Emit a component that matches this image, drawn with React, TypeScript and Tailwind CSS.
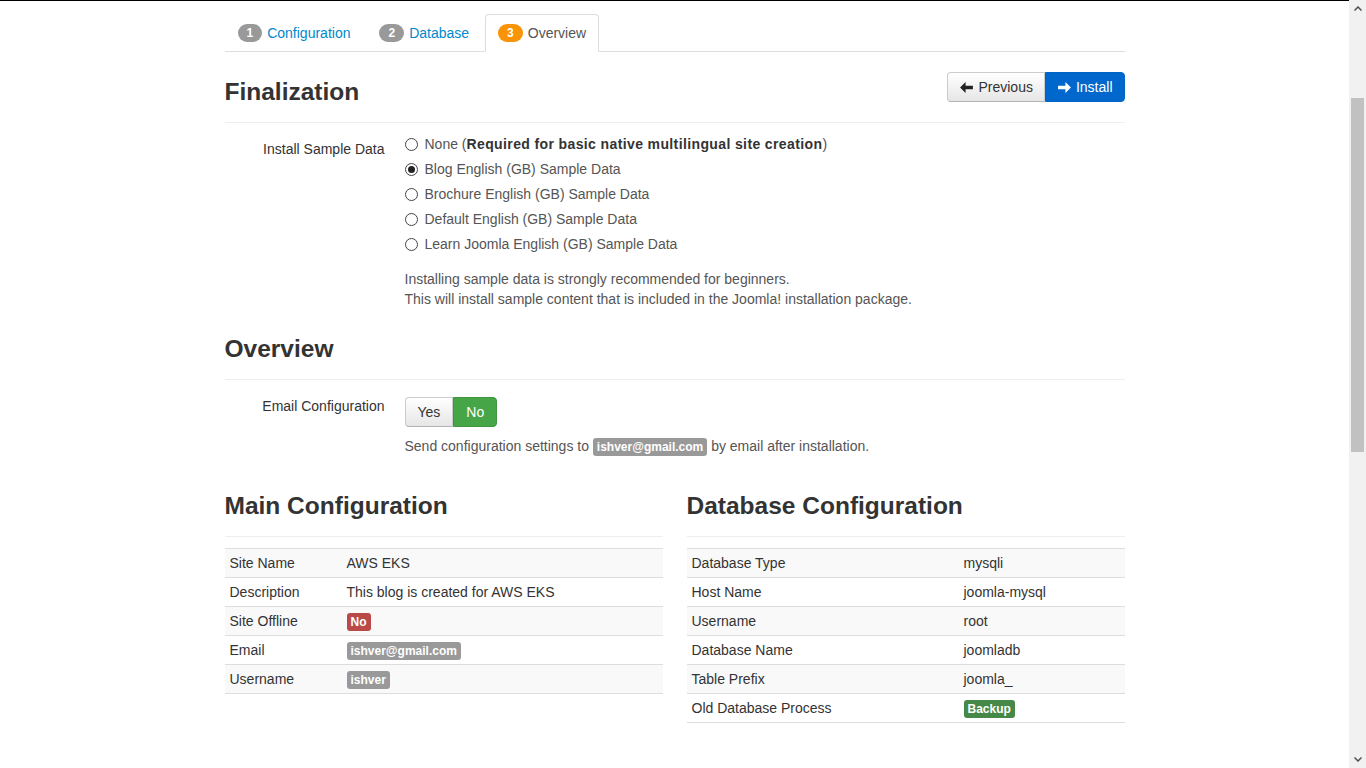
import React from "react";

function ArrowLeft({ className }: { className?: string }) {
  return (
    <svg viewBox="0 0 14 12" className={className} fill="currentColor">
      <polygon points="0,6 6,0 6,4 14,4 14,8 6,8 6,12" />
    </svg>
  );
}
function ArrowRight({ className }: { className?: string }) {
  return (
    <svg viewBox="0 0 14 12" className={className} fill="currentColor">
      <polygon points="14,6 8,0 8,4 0,4 0,8 8,8 8,12" />
    </svg>
  );
}

function Radio({ checked, children }: { checked?: boolean; children: React.ReactNode }) {
  return (
    <div className="mb-[5px] flex h-5 items-center">
      <span className="mr-[7px] flex h-[13px] w-[13px] items-center justify-center rounded-full border border-[#444] bg-white">
        {checked && <span className="h-[7px] w-[7px] rounded-full bg-[#222]" />}
      </span>
      <span className="text-[#555]">{children}</span>
    </div>
  );
}

function Label({ color, children }: { color: string; children: React.ReactNode }) {
  return (
    <span
      className={`inline-block rounded-[3px] px-1 py-[2px] align-baseline text-[12px] font-bold leading-[14px] text-white ${color}`}
    >
      {children}
    </span>
  );
}

function Tab({ n, label, active }: { n: string; label: string; active?: boolean }) {
  return (
    <li className="-mb-px mr-[3px]">
      <div
        className={`flex h-[38px] items-center rounded-t-[4px] border px-3 ${
          active ? "border-[#ddd] border-b-white bg-white text-[#555]" : "border-transparent text-[#0088cc]"
        }`}
      >
        <span
          className={`mr-[5px] inline-flex h-[18px] items-center rounded-full px-[9px] text-[12px] font-bold text-white ${
            active ? "bg-[#f89406]" : "bg-[#999]"
          }`}
        >
          {n}
        </span>
        {label}
      </div>
    </li>
  );
}

type Row = { k: string; v: React.ReactNode };

function ConfigTable({ rows, firstCol }: { rows: Row[]; firstCol: string }) {
  return (
    <table className="mt-[11px] w-full border-collapse">
      <tbody>
        {rows.map((r, i) => (
          <tr key={r.k} className={i % 2 === 0 ? "bg-[#f9f9f9]" : "bg-white"}>
            <td
              className={`${firstCol} border-t border-[#ddd] px-[5px] py-1 align-top leading-5 ${
                i === rows.length - 1 ? "border-b" : ""
              }`}
            >
              {r.k}
            </td>
            <td
              className={`border-t border-[#ddd] px-[5px] py-1 align-top leading-5 ${
                i === rows.length - 1 ? "border-b" : ""
              }`}
            >
              {r.v}
            </td>
          </tr>
        ))}
      </tbody>
    </table>
  );
}

export default function App() {
  const mainRows: Row[] = [
    { k: "Site Name", v: "AWS EKS" },
    { k: "Description", v: "This blog is created for AWS EKS" },
    { k: "Site Offline", v: <Label color="bg-[#b94a48]">No</Label> },
    { k: "Email", v: <Label color="bg-[#999]">ishver@gmail.com</Label> },
    { k: "Username", v: <Label color="bg-[#999]">ishver</Label> },
  ];
  const dbRows: Row[] = [
    { k: "Database Type", v: "mysqli" },
    { k: "Host Name", v: "joomla-mysql" },
    { k: "Username", v: "root" },
    { k: "Database Name", v: "joomladb" },
    { k: "Table Prefix", v: "joomla_" },
    { k: "Old Database Process", v: <Label color="bg-[#468847]">Backup</Label> },
  ];

  return (
    <div className="flex h-screen w-full overflow-hidden bg-white font-['Liberation_Sans',Arial,sans-serif] text-[14px] leading-5 text-[#333]">
      <div className="flex-1 border-t border-black">
        <div className="mx-auto w-[900px]">
          <ul className="mt-[13px] flex border-b border-[#ddd]">
            <Tab n="1" label="Configuration" />
            <Tab n="2" label="Database" />
            <Tab n="3" label="Overview" active />
          </ul>

          <div className="mt-5 flex items-start justify-between">
            <h3 className="text-[24.5px] font-bold leading-10 text-[#333]">Finalization</h3>
            <div className="flex">
              <div className="flex h-[30px] items-center rounded-l-[4px] border border-[#ccc] border-b-[#b3b3b3] bg-gradient-to-b from-white to-[#e6e6e6] pl-3 pr-[11px] text-[#333]">
                <ArrowLeft className="mr-[5px] h-[11px] w-[13px] text-[#222]" />
                Previous
              </div>
              <div className="flex h-[30px] items-center rounded-r-[4px] border border-[#0064c4] bg-[#0068cc] pl-3 pr-[11px] text-white">
                <ArrowRight className="mr-[5px] h-[11px] w-[13px] text-white" />
                Install
              </div>
            </div>
          </div>
          <div className="mt-[10px] border-t border-[#eee]" />

          <div className="mt-[11px] flex">
            <div className="w-[160px] pt-[5px] text-right">Install Sample Data</div>
            <div className="ml-5">
              <Radio>
                None (
                <b className="font-bold tracking-[0.38px] text-[#333]">
                  Required for basic native multilingual site creation
                </b>
                )
              </Radio>
              <Radio checked>Blog English (GB) Sample Data</Radio>
              <Radio>Brochure English (GB) Sample Data</Radio>
              <Radio>Default English (GB) Sample Data</Radio>
              <Radio>Learn Joomla English (GB) Sample Data</Radio>
              <p className="mt-[15px] text-[#555]">Installing sample data is strongly recommended for beginners.</p>
              <p className="text-[#555]">
                This will install sample content that is included in the Joomla! installation package.
              </p>
            </div>
          </div>

          <h3 className="mt-5 text-[24.5px] font-bold leading-10 text-[#333]">Overview</h3>
          <div className="mt-[10px] border-t border-[#eee]" />

          <div className="mt-3 flex">
            <div className="w-[160px] pt-[4px] text-right">Email Configuration</div>
            <div className="ml-5 pt-[5px]">
              <div className="flex">
                <div className="flex h-[30px] items-center rounded-l-[4px] border border-[#ccc] border-b-[#b3b3b3] bg-gradient-to-b from-white to-[#e6e6e6] px-3 text-[#333]">
                  Yes
                </div>
                <div className="flex h-[30px] items-center rounded-r-[4px] border border-[#3f943f] bg-[#46a546] px-3 text-white">
                  No
                </div>
              </div>
              <p className="mt-[9px] text-[#555]">
                Send configuration settings to <Label color="bg-[#999]">ishver@gmail.com</Label> by email after
                installation.
              </p>
            </div>
          </div>

          <div className="mt-[30px] grid grid-cols-2 gap-x-6">
            <div>
              <h3 className="text-[24.5px] font-bold leading-10 text-[#333]">Main Configuration</h3>
              <div className="mt-[10px] border-t border-[#eee]" />
              <ConfigTable rows={mainRows} firstCol="w-[117px]" />
            </div>
            <div>
              <h3 className="text-[24.5px] font-bold leading-10 text-[#333]">Database Configuration</h3>
              <div className="mt-[10px] border-t border-[#eee]" />
              <ConfigTable rows={dbRows} firstCol="w-[272px]" />
            </div>
          </div>
        </div>
      </div>

      <div className="flex w-[17px] flex-col bg-[#f1f1f1]">
        <div className="flex h-[17px] items-center justify-center">
          <svg viewBox="0 0 8 5" className="h-[5px] w-[8px]" fill="none" stroke="#505050" strokeWidth="1.5">
            <polyline points="0.5,4.5 4,1 7.5,4.5" />
          </svg>
        </div>
        <div className="mx-[2px] mt-[81px] h-[354px] bg-[#c1c1c1]" />
        <div className="flex-1" />
        <div className="flex h-[17px] items-center justify-center">
          <svg viewBox="0 0 8 5" className="h-[5px] w-[8px]" fill="none" stroke="#505050" strokeWidth="1.5">
            <polyline points="0.5,0.5 4,4 7.5,0.5" />
          </svg>
        </div>
      </div>
    </div>
  );
}
